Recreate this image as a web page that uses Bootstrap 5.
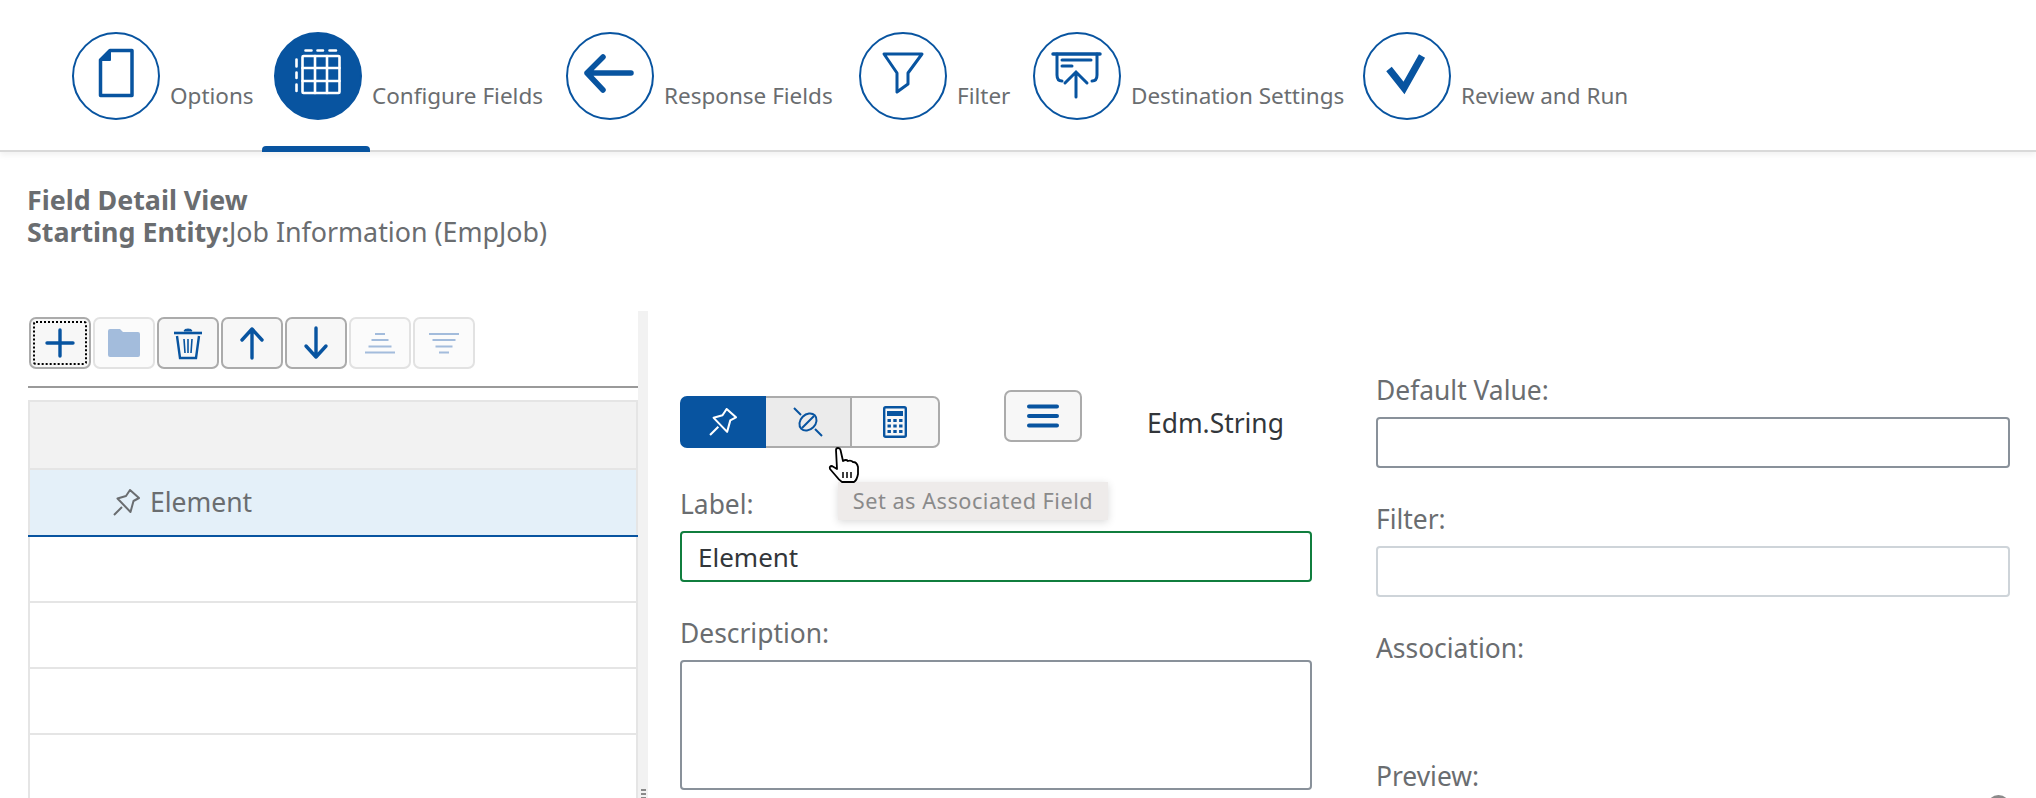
<!DOCTYPE html>
<html lang="en">
<head>
  <meta charset="UTF-8" />
  <title>Configure Fields</title>
  <link href="https://cdn.jsdelivr.net/npm/bootstrap@5.3.1/dist/css/bootstrap.min.css" rel="stylesheet"/>
  <style>
    html, body { height: 798px; overflow: hidden; }
    body { font-family: "Noto Sans", "Liberation Sans", sans-serif; color: #6a6d70; background: #fff; }

    /* top wizard */
    .wizard-bar { height: 152px; padding: 32px 0 0 72px; gap: 23px; border-bottom: 2px solid #d9d9d9; box-shadow: 0 3px 6px rgba(0,0,0,.06); }
    .wizard-step { position: relative; gap: 10px; height: 88px; color: #6a6d70; text-decoration: none; font-size: 22.5px; line-height: 30px; }
    .wizard-circle { width: 88px; height: 88px; border-radius: 50%; border: 2px solid #0854a0; flex: none; color: #0854a0; background: #fff; }
    .wizard-circle svg { display: block; margin: -2px; }
    .wizard-step span { margin-top: 49px; white-space: nowrap; }
    .wizard-step:nth-child(1) span { width: 81px; }
    .wizard-step:nth-child(2) span { width: 171px; }
    .wizard-step:nth-child(3) span { width: 172px; }
    .wizard-step:nth-child(4) span { width: 53px; }
    .wizard-step:nth-child(5) span { width: 209px; }
    .wizard-step.on .wizard-circle { background: #0854a0; color: #fff; }
    .step-mark { position: absolute; left: -12px; width: 108px; top: 114px; height: 6px; background: #0854a0; border-radius: 4px 4px 0 0; }

    .head-block { padding: 32px 0 0 27px; height: 159px; font-size: 26.8px; line-height: 32px; }

    /* left pane */
    .tree-pane { width: 610px; margin-left: 28px; flex: none; }
    .tool-row { padding: 6px 0 0 1px; gap: 2px; height: 77px; border-bottom: 2px solid #9a9a9a; }
    .tool-btn { width: 62px; height: 52px; padding: 0; border: 2px solid #ababab; border-radius: 7px; background: #f7f7f7; color: #0854a0; }
    .tool-btn:disabled { border: 2px solid #e2e2e2; background: #fbfbfb; color: #a3bcdc; opacity: 1; }
    .tool-btn.focused { outline: 2px dotted #000; outline-offset: -6px; }
    .tool-btn svg { display: block; margin: 0 auto; }

    .field-table { margin: 12px 0 0; border-collapse: collapse; width: 100%; border: 2px solid #e5e5e5; }
    .field-table td, .field-table th { height: 66px; padding: 0; border: 0; border-bottom: 2px solid #e5e5e5; background: #fff; box-shadow: none; }
    .field-table th { height: 68px; background: #f2f2f2; }
    .field-table tr.sel td { height: 67px; background: #e4f0f9; border-bottom: 2px solid #0854a0; color: #6a6d70; font-size: 26.5px; }
    .row-name { padding-left: 83px; gap: 10px; }

    .split-bar { width: 10px; flex: none; background: #f2f2f2; height: 488px; position: relative; }
    .split-grip { position: absolute; left: 3px; bottom: 0; width: 5px; height: 10px; background: repeating-linear-gradient(#8a8a8a 0 2px, #f2f2f2 2px 4px); }

    /* form */
    .form-one { width: 632px; margin-left: 32px; flex: none; padding-top: 79px; }
    .form-two { width: 634px; margin-left: 64px; flex: none; padding-top: 61px; }
    .top-tools { height: 52px; margin-bottom: 44px; align-items: flex-start; }
    .seg-group { margin-top: 6px; }
    .seg-btn { width: 86px; height: 52px; padding: 0; border: 2px solid #ababab; background: #f7f7f7; color: #0854a0; border-radius: 0; }
    .seg-btn svg { display: block; margin: 0 auto; }
    .btn-group > .seg-btn:first-child { background: #0854a0; border-color: #0854a0; color: #fff; border-radius: 7px 0 0 7px; }
    .btn-group > .seg-btn.seg-btn:not(:first-child) { margin-left: 0; }
    .btn-group > .seg-btn.hov { background: #ebebeb; border-left: 0; }
    .btn-group > .seg-btn:last-child { border-radius: 0 7px 7px 0; border-left: 0; width: 88px; }
    .menu-btn { width: 78px; height: 52px; padding: 0; margin-left: 64px; border: 2px solid #ababab; border-radius: 7px; background: #f7f7f7; color: #0854a0; }
    .menu-btn svg { display: block; margin: 0 auto; }
    .edm-type { margin-left: 65px; margin-top: 15px; font-size: 26.4px; line-height: 36px; color: #32363a; }

    .fld-label { display: block; margin: 0 0 9px; font-size: 26.4px; line-height: 36px; color: #6a6d70; }
    .fld-input { display: block; height: 51px; border: 2px solid #89919a; border-radius: 4px; padding: 0 16px; font-size: 26px; color: #32363a; box-shadow: none; }
    .fld-input.ok { border-color: #107e3e; }
    .fld-input.dim { border-color: #ced4d9; }
    textarea.fld-input { height: 130px; resize: none; }
    .gap-label { margin-top: 33px; }
    .preview-label { margin-top: 92px; }

    .hint-tip { position: absolute; left: 158px; top: 171px; width: 270px; height: 38px; background: #eeebea; color: #8a8a8a; font-size: 21.7px; line-height: 38px; text-align: center; box-shadow: 0 2px 8px rgba(0,0,0,.15); letter-spacing: .5px; white-space: nowrap; z-index: 3; }
    .hand-cursor { position: absolute; left: 148px; top: 136px; z-index: 4; }
    .help-dot { position: absolute; right: 26px; top: 484px; width: 23px; height: 23px; border-radius: 50%; background: #8a8a8a; }
  </style>
</head>
<body>
  <nav class="wizard-bar d-flex align-items-start">
    <a class="wizard-step d-flex" href="#">
      <div class="wizard-circle">
        <svg width="88" height="88" viewBox="0 0 88 88" fill="none" stroke="currentColor" stroke-width="3.5" stroke-linejoin="round"><path d="M38 18.500H60V63.500H28.500V28Z"/><path d="M38 18.500V28H28.500Z" fill="currentColor" stroke-width="2"/></svg>
      </div>
      <span>Options</span>
    </a>
    <a class="wizard-step on d-flex" href="#">
      <div class="wizard-circle">
        <svg width="88" height="88" viewBox="0 0 88 88" fill="none" stroke="currentColor" stroke-width="2.6" stroke-linecap="round"><rect x="28.500" y="24" width="37" height="37" rx="1"/><path d="M41 24V61M53 24V61M28.500 36H65.500M28.500 49H65.500"/><path d="M31.500 18.500H37.500M43.500 18.500H49M55.500 18.500H62M22.500 27.500V34.500M22.500 40.500V46M22.500 52.500V59"/></svg>
      </div>
      <span>Configure Fields</span>
      <i class="step-mark"></i>
    </a>
    <a class="wizard-step d-flex" href="#">
      <div class="wizard-circle">
        <svg width="88" height="88" viewBox="0 0 88 88" fill="none" stroke="currentColor" stroke-width="5.5" stroke-linecap="round" stroke-linejoin="round"><path d="M65 41H21M37 25L21 41L37 58"/></svg>
      </div>
      <span>Response Fields</span>
    </a>
    <a class="wizard-step d-flex" href="#">
      <div class="wizard-circle">
        <svg width="88" height="88" viewBox="0 0 88 88" fill="none" stroke="currentColor" stroke-width="3" stroke-linejoin="round"><path d="M25 22H63L49 41V52L38 60V41Z"/></svg>
      </div>
      <span>Filter</span>
    </a>
    <a class="wizard-step d-flex" href="#">
      <div class="wizard-circle">
        <svg width="88" height="88" viewBox="0 0 88 88" fill="none" stroke="currentColor" stroke-width="3" stroke-linecap="round"><path d="M20 22H67" stroke-width="3.500"/><path d="M24 22V43Q24 49 29 49M64 22V43Q64 49 59 49M29 28H58M29 34H39"/><path d="M43 65V41M32 51L43 40L54 51"/></svg>
      </div>
      <span>Destination Settings</span>
    </a>
    <a class="wizard-step d-flex" href="#">
      <div class="wizard-circle">
        <svg width="88" height="88" viewBox="0 0 88 88" fill="none" stroke="currentColor" stroke-width="7"><path d="M26 37L41 56L59 24"/></svg>
      </div>
      <span>Review and Run</span>
    </a>
  </nav>

  <div class="head-block">
    <div class="fw-bold">Field Detail View</div>
    <div><b>Starting Entity:</b>Job Information (EmpJob)</div>
  </div>

  <div class="d-flex position-relative">
    <div class="tree-pane">
      <div class="tool-row d-flex align-items-start">
        <button class="btn tool-btn focused">
          <svg width="30" height="30" viewBox="0 0 30 30" fill="none" stroke="currentColor" stroke-width="3.4" stroke-linecap="round"><path d="M15 2V28M2 15H28"/></svg>
        </button>
        <button class="btn tool-btn" disabled>
          <svg width="32" height="28" viewBox="0 0 32 28" fill="currentColor"><path d="M0 2Q0 0 2 0H12L15 3H30Q32 3 32 5V26Q32 28 30 28H2Q0 28 0 26Z"/></svg>
        </button>
        <button class="btn tool-btn">
          <svg width="30" height="33" viewBox="0 0 30 33" fill="none" stroke="currentColor" stroke-width="2.4"><path d="M1 6H29" stroke-width="2.6"/><path d="M11 4Q11 2 15 2Q19 2 19 4Z" fill="currentColor" stroke-width="1"/><path d="M11 12L12 26M15 12V26M19 12L18 26" stroke-width="1.600"/><path d="M4 9L7 31H23L26 9"/></svg>
        </button>
        <button class="btn tool-btn">
          <svg width="26" height="34" viewBox="0 0 26 34" fill="none" stroke="currentColor" stroke-width="3.4" stroke-linecap="round" stroke-linejoin="round"><path d="M13 32V3M3 14L13 3L23 14"/></svg>
        </button>
        <button class="btn tool-btn">
          <svg width="26" height="34" viewBox="0 0 26 34" fill="none" stroke="currentColor" stroke-width="3.4" stroke-linecap="round" stroke-linejoin="round"><path d="M13 2V31M3 20L13 31L23 20"/></svg>
        </button>
        <button class="btn tool-btn" disabled>
          <svg width="30" height="22" viewBox="0 0 30 22" fill="none" stroke="currentColor" stroke-width="2.2"><path d="M10 2H20M6.5 8H23.5M3.5 14.500H26.500M0 20.500H30"/></svg>
        </button>
        <button class="btn tool-btn" disabled>
          <svg width="30" height="22" viewBox="0 0 30 22" fill="none" stroke="currentColor" stroke-width="2.2"><path d="M0 2H30M3.500 8H26.500M6.500 14.500H23.500M10 20.500H20"/></svg>
        </button>
      </div>
      <table class="table field-table">
        <thead><tr><th></th></tr></thead>
        <tbody>
          <tr class="sel"><td class="align-middle">
            <div class="row-name d-flex align-items-center">
              <svg width="27" height="27" viewBox="0 0 27 27" fill="none" stroke="#6a6d70" stroke-width="2" stroke-linejoin="round"><path d="M1 26L9 18M17 1L26 9L20.500 12L17.500 23L4.500 9.500L13 7Z"/></svg>
              <span>Element</span>
            </div>
          </td></tr>
          <tr><td></td></tr>
          <tr><td></td></tr>
          <tr><td></td></tr>
          <tr><td></td></tr>
        </tbody>
      </table>
    </div>
    <div class="split-bar"><i class="split-grip"></i></div>

    <div class="form-one position-relative">
      <div class="top-tools d-flex">
        <div class="btn-group seg-group">
          <button class="btn seg-btn">
            <svg width="28" height="28" viewBox="0 0 27 27" fill="none" stroke="#fff" stroke-width="2" stroke-linejoin="round"><path d="M1 26L9 18M17 1L26 9L20.500 12L17.500 23L4.500 9.500L13 7Z"/></svg>
          </button>
          <button class="btn seg-btn hov">
            <svg width="30" height="30" viewBox="0 0 30 30" fill="none" stroke="currentColor" stroke-width="2"><path d="M1 1L8 8M22 22L29 29M9 21L21 9"/><ellipse cx="15" cy="15" rx="9.500" ry="7.500" transform="rotate(-45 15 15)"/></svg>
          </button>
          <button class="btn seg-btn">
            <svg width="24" height="32" viewBox="0 0 24 32" fill="none"><rect x="1.200" y="1.200" width="21.600" height="29.600" rx="1.500" stroke="currentColor" stroke-width="2.4"/><rect x="4" y="5" width="16" height="5" fill="currentColor"/><g fill="currentColor"><rect x="4.500" y="13" width="3.400" height="3"/><rect x="10.300" y="13" width="3.400" height="3"/><rect x="16.100" y="13" width="3.400" height="3"/><rect x="4.500" y="18.500" width="3.400" height="3"/><rect x="10.300" y="18.500" width="3.400" height="3"/><rect x="16.100" y="18.500" width="3.400" height="3"/><rect x="4.500" y="24" width="3.400" height="3"/><rect x="10.300" y="24" width="3.400" height="3"/><rect x="16.100" y="24" width="3.400" height="3"/></g></svg>
          </button>
        </div>
        <button class="btn menu-btn">
          <svg width="32" height="24" viewBox="0 0 32 24" fill="none" stroke="currentColor" stroke-width="4" stroke-linecap="round"><path d="M2 2.500H30M2 12H30M2 21.500H30"/></svg>
        </button>
        <div class="edm-type">Edm.String</div>
      </div>

      <label class="fld-label">Label:</label>
      <input class="form-control fld-input ok" value="Element" />
      <label class="fld-label gap-label">Description:</label>
      <textarea class="form-control fld-input"></textarea>

      <div class="hint-tip">Set as Associated Field</div>
      <svg class="hand-cursor" width="32" height="36" viewBox="0 0 32 36" fill="#fff" stroke="#000" stroke-width="1.800" stroke-linejoin="round"><path d="M8 3Q8 1 10 1Q12 1 12.500 3L15 14Q18 12 20 14Q23 13 25 15Q29 15 30 20V27Q29 33 26 35H14Q11 33 8 29L2 22Q1 19 4 19L9 22Z"/><path d="M15 25V31M19 25V31M23 25V31" stroke-width="1.500"/></svg>
    </div>

    <div class="form-two">
      <label class="fld-label">Default Value:</label>
      <input class="form-control fld-input" />
      <label class="fld-label gap-label">Filter:</label>
      <input class="form-control fld-input dim" />
      <label class="fld-label gap-label">Association:</label>
      <label class="fld-label preview-label">Preview:</label>
    </div>
    <i class="help-dot"></i>
  </div>

  <script src="https://cdn.jsdelivr.net/npm/bootstrap@5.3.1/dist/js/bootstrap.bundle.min.js"></script>
</body>
</html>
